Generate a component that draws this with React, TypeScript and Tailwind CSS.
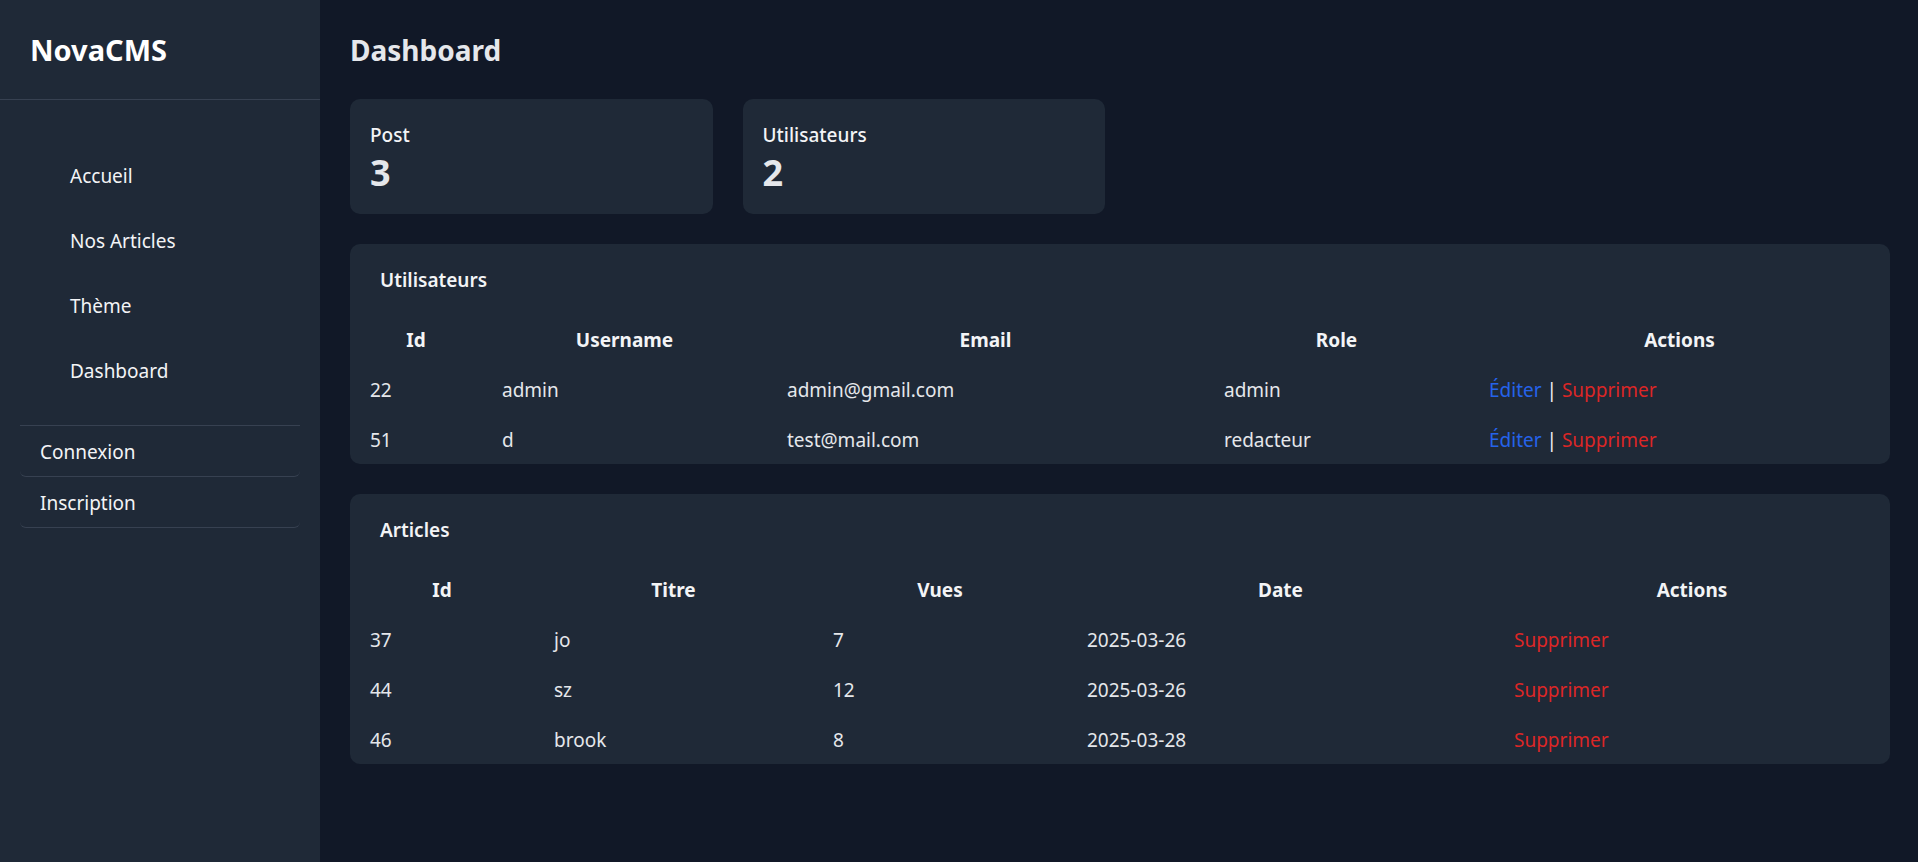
import React from 'react'

type Col = { label: string; width: string }

const userCols: Col[] = [
  { label: 'Id', width: 'w-[132px]' },
  { label: 'Username', width: 'w-[285px]' },
  { label: 'Email', width: 'w-[437px]' },
  { label: 'Role', width: 'w-[265px]' },
  { label: 'Actions', width: 'w-[421px]' },
]

const articleCols: Col[] = [
  { label: 'Id', width: 'w-[184px]' },
  { label: 'Titre', width: 'w-[279px]' },
  { label: 'Vues', width: 'w-[254px]' },
  { label: 'Date', width: 'w-[427px]' },
  { label: 'Actions', width: 'w-[396px]' },
]

const users = [
  { id: 22, username: 'admin', email: 'admin@gmail.com', role: 'admin' },
  { id: 51, username: 'd', email: 'test@mail.com', role: 'redacteur' },
]

const articles = [
  { id: 37, titre: 'jo', vues: 7, date: '2025-03-26' },
  { id: 44, titre: 'sz', vues: 12, date: '2025-03-26' },
  { id: 46, titre: 'brook', vues: 8, date: '2025-03-28' },
]

const navLinks = ['Accueil', 'Nos Articles', 'Thème', 'Dashboard']
const authLinks = ['Connexion', 'Inscription']

const StatCard = ({ label, value }: { label: string; value: number }) => (
  <div className="bg-[#1f2937] rounded-[10px] px-5 pt-[21px] pb-[19px]">
    <p className="text-[19px] leading-[30px] font-medium text-gray-100">{label}</p>
    <p className="text-[36px] leading-[45px] font-bold text-gray-200">{value}</p>
  </div>
)

const Panel = ({
  title,
  cols,
  children,
}: {
  title: string
  cols: Col[]
  children: React.ReactNode
}) => (
  <section className="bg-[#1f2937] rounded-[10px]">
    <h3 className="px-[30px] pt-[21px] pb-[19px] text-[19px] leading-[30px] font-semibold text-gray-100">
      {title}
    </h3>
    <table className="w-full table-fixed">
      <thead>
        <tr>
          {cols.map((c) => (
            <th
              key={c.label}
              className={`${c.width} px-5 pt-[11px] pb-[9px] text-center text-[19px] leading-[30px] font-bold text-gray-100`}
            >
              {c.label}
            </th>
          ))}
        </tr>
      </thead>
      <tbody>{children}</tbody>
    </table>
  </section>
)

const td = 'px-5 pt-[11px] pb-[9px] text-left text-[19px] leading-[30px] text-gray-200'

export default function App() {
  return (
    <div className="flex min-h-screen bg-[#111827] font-['Noto_Sans',sans-serif]">
      <aside className="w-[320px] shrink-0 bg-[#1f2937] min-h-screen">
        <div className="h-[100px] px-[30px] flex items-center border-b border-[#374151]">
          <span className="text-[29px] font-bold text-white">NovaCMS</span>
        </div>
        <ul className="pt-[44px] pl-[70px]">
          {navLinks.map((l) => (
            <li key={l} className="h-[65px] flex items-center text-[19px] text-gray-100">
              {l}
            </li>
          ))}
        </ul>
        <div className="mx-5 mt-[21px] border-t border-[#374151]">
          {authLinks.map((l) => (
            <div
              key={l}
              className="h-[51px] px-5 pt-[2px] flex items-center border-b border-[#374151] rounded-md text-[19px] text-gray-100"
            >
              {l}
            </div>
          ))}
        </div>
      </aside>

      <main className="flex-1 pt-[30px] pl-[30px] pr-[28px]">
        <h1 className="text-[28px] leading-[40px] font-bold text-gray-200 mb-[29px]">Dashboard</h1>

        <div className="grid grid-cols-4 gap-[30px] mb-[30px]">
          <StatCard label="Post" value={3} />
          <StatCard label="Utilisateurs" value={2} />
        </div>

        <div className="flex flex-col gap-[30px]">
          <Panel title="Utilisateurs" cols={userCols}>
            {users.map((u) => (
              <tr key={u.id}>
                <td className={td}>{u.id}</td>
                <td className={td}>{u.username}</td>
                <td className={td}>{u.email}</td>
                <td className={td}>{u.role}</td>
                <td className={td}>
                  <span className="text-[#2563eb]">Éditer</span>
                  <span className="text-gray-100"> | </span>
                  <span className="text-[#dc2626]">Supprimer</span>
                </td>
              </tr>
            ))}
          </Panel>

          <Panel title="Articles" cols={articleCols}>
            {articles.map((a) => (
              <tr key={a.id}>
                <td className={td}>{a.id}</td>
                <td className={td}>{a.titre}</td>
                <td className={td}>{a.vues}</td>
                <td className={td}>{a.date}</td>
                <td className={td}>
                  <span className="text-[#dc2626]">Supprimer</span>
                </td>
              </tr>
            ))}
          </Panel>
        </div>
      </main>
    </div>
  )
}
